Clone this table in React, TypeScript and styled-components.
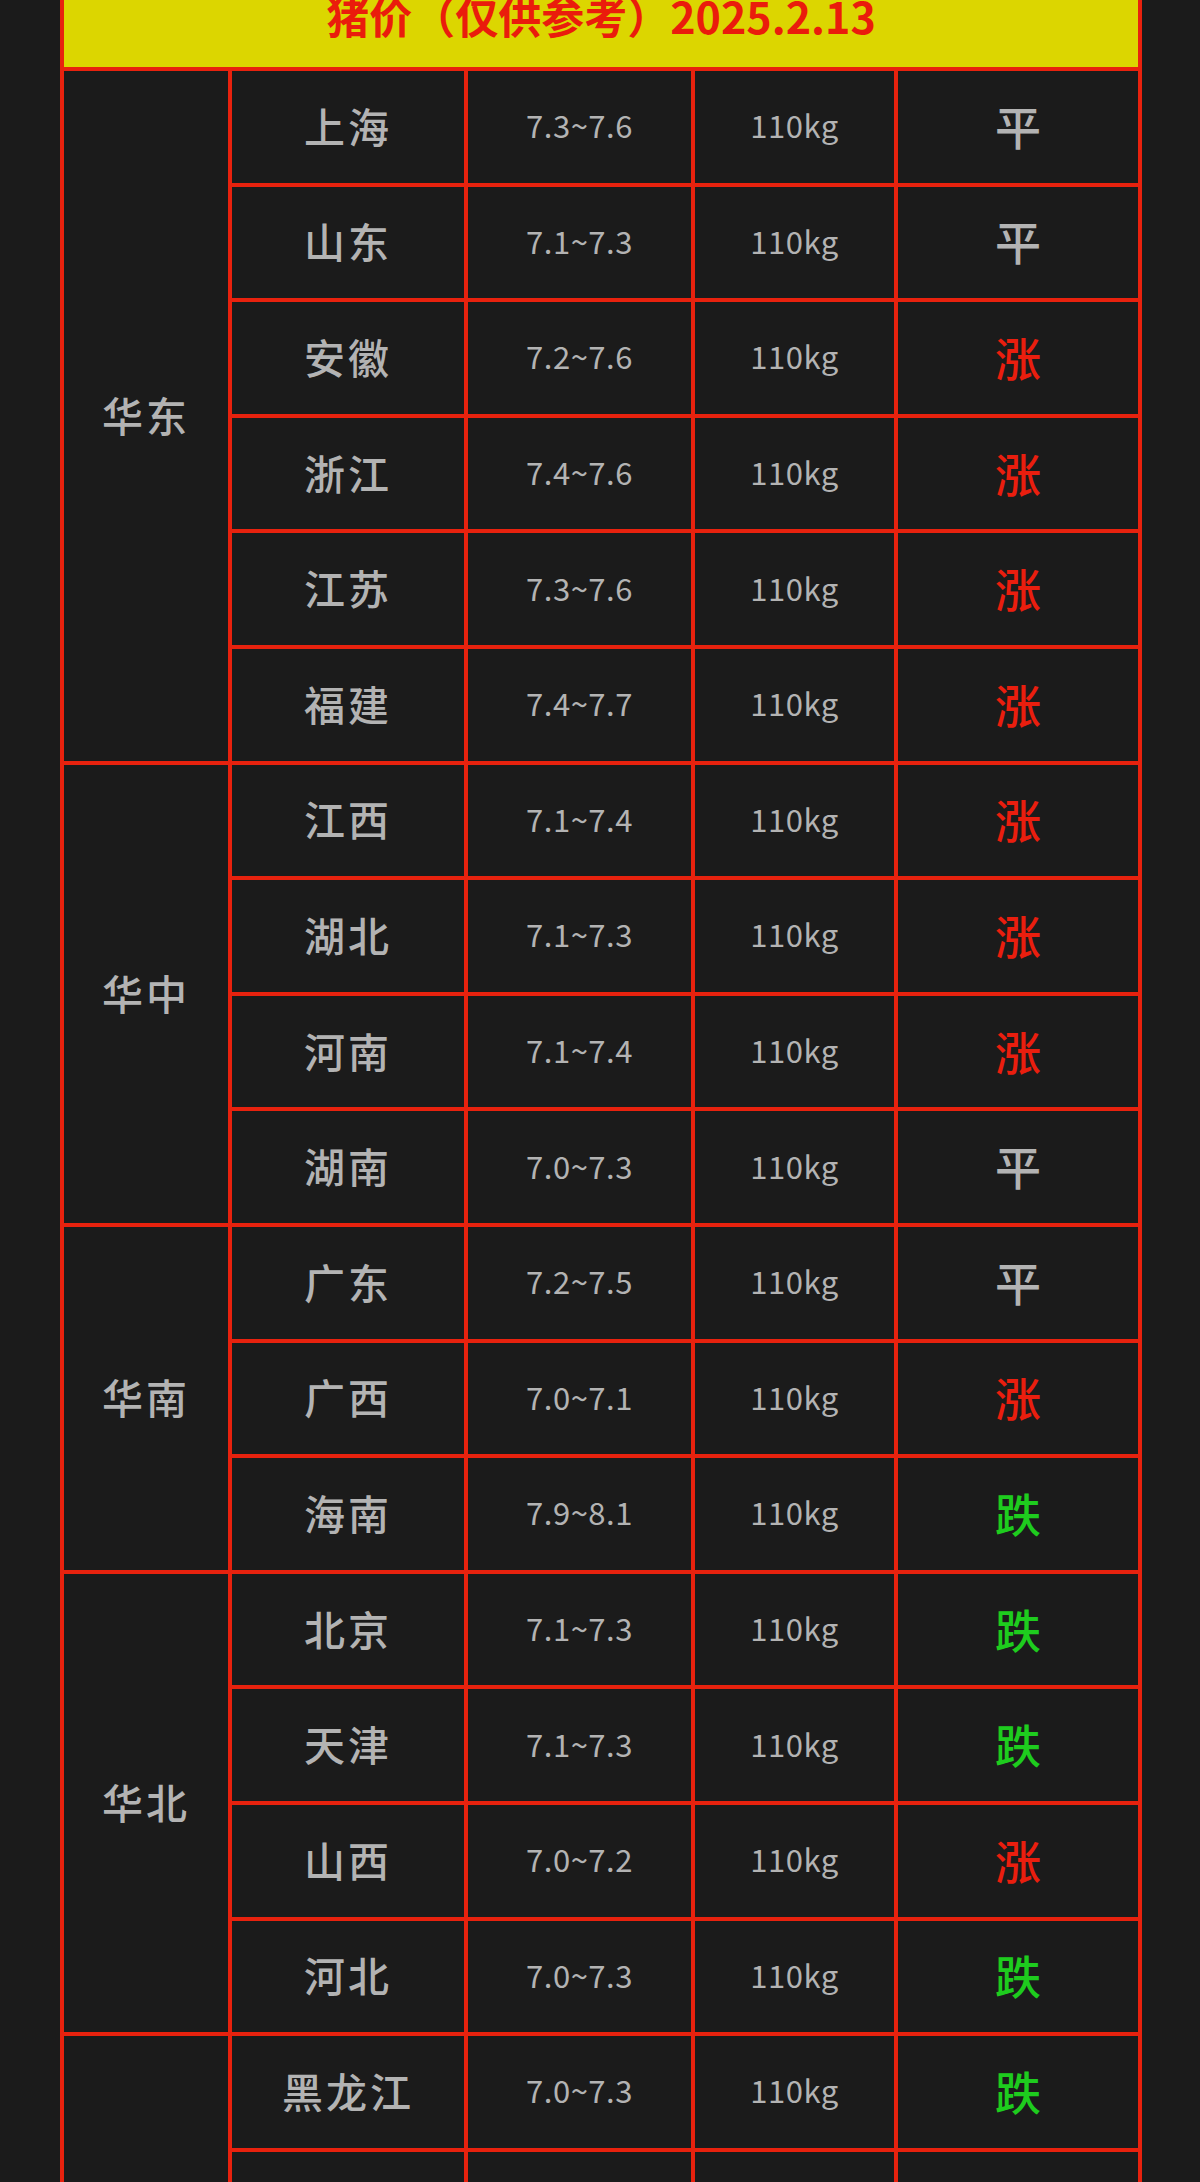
import React from "react";
import styled, { createGlobalStyle } from "styled-components";

const GlobalStyle = createGlobalStyle`
  html, body {
    margin: 0;
    padding: 0;
    background: #1b1b1b;
  }
  body {
    font-family: "Noto Sans CJK SC", "Noto Sans", sans-serif;
  }
`;

const Page = styled.div`
  height: 2182px;
  overflow: hidden;
  background: #1b1b1b;
`;

const Table = styled.table`
  width: 1078px;
  margin: -31px 0 0 60px;
  border-collapse: collapse;
  table-layout: fixed;
`;

const Col = styled.col<{ $w: number }>`
  width: ${(p) => p.$w}px;
`;

const HeaderCell = styled.th`
  height: 84px;
  padding: 0 0 10px;
  background: #dcd600;
  border: 4px solid #e8220e;
  color: #ea1c0c;
  font-size: 43px;
  font-weight: 700;
  line-height: 1;
  text-align: center;
`;

const Row = styled.tr`
  height: 115.6px;
`;

const Cell = styled.td`
  padding: 0 0 4px;
  border: 4px solid #e8220e;
  text-align: center;
  vertical-align: middle;
  color: #b3b3b3;
`;

const NameCell = styled(Cell)`
  font-size: 41px;
  font-weight: 500;
  letter-spacing: 3px;
`;

const NumberCell = styled(Cell)`
  font-size: 31px;
  letter-spacing: 0.5px;
`;

type Trend = "平" | "涨" | "跌";

const trendColor: Record<Trend, string> = {
  平: "#b3b3b3",
  涨: "#ea1e0e",
  跌: "#1ecc1e",
};

const TrendCell = styled(Cell)<{ $trend: Trend }>`
  font-size: 46px;
  font-weight: 500;
  color: ${(p) => trendColor[p.$trend]};
`;

type Item = { name: string; price: string; trend: Trend };

const columns = [168, 236, 227, 203, 244];

const regions: { region: string; items: Item[] }[] = [
  {
    region: "华东",
    items: [
      { name: "上海", price: "7.3~7.6", trend: "平" },
      { name: "山东", price: "7.1~7.3", trend: "平" },
      { name: "安徽", price: "7.2~7.6", trend: "涨" },
      { name: "浙江", price: "7.4~7.6", trend: "涨" },
      { name: "江苏", price: "7.3~7.6", trend: "涨" },
      { name: "福建", price: "7.4~7.7", trend: "涨" },
    ],
  },
  {
    region: "华中",
    items: [
      { name: "江西", price: "7.1~7.4", trend: "涨" },
      { name: "湖北", price: "7.1~7.3", trend: "涨" },
      { name: "河南", price: "7.1~7.4", trend: "涨" },
      { name: "湖南", price: "7.0~7.3", trend: "平" },
    ],
  },
  {
    region: "华南",
    items: [
      { name: "广东", price: "7.2~7.5", trend: "平" },
      { name: "广西", price: "7.0~7.1", trend: "涨" },
      { name: "海南", price: "7.9~8.1", trend: "跌" },
    ],
  },
  {
    region: "华北",
    items: [
      { name: "北京", price: "7.1~7.3", trend: "跌" },
      { name: "天津", price: "7.1~7.3", trend: "跌" },
      { name: "山西", price: "7.0~7.2", trend: "涨" },
      { name: "河北", price: "7.0~7.3", trend: "跌" },
    ],
  },
  {
    region: "东北",
    items: [
      { name: "黑龙江", price: "7.0~7.3", trend: "跌" },
      { name: "吉林", price: "7.0~7.3", trend: "跌" },
      { name: "辽宁", price: "7.0~7.3", trend: "跌" },
    ],
  },
];

export default function App() {
  return (
    <Page>
      <GlobalStyle />
      <Table>
        <colgroup>
          {columns.map((w, i) => (
            <Col key={i} $w={w} />
          ))}
        </colgroup>
        <thead>
          <tr>
            <HeaderCell colSpan={5}>猪价（仅供参考）2025.2.13</HeaderCell>
          </tr>
        </thead>
        <tbody>
          {regions.map((r) =>
            r.items.map((it, i) => (
              <Row key={r.region + it.name}>
                {i === 0 && <NameCell rowSpan={r.items.length}>{r.region}</NameCell>}
                <NameCell>{it.name}</NameCell>
                <NumberCell>{it.price}</NumberCell>
                <NumberCell>110kg</NumberCell>
                <TrendCell $trend={it.trend}>{it.trend}</TrendCell>
              </Row>
            ))
          )}
        </tbody>
      </Table>
    </Page>
  );
}
